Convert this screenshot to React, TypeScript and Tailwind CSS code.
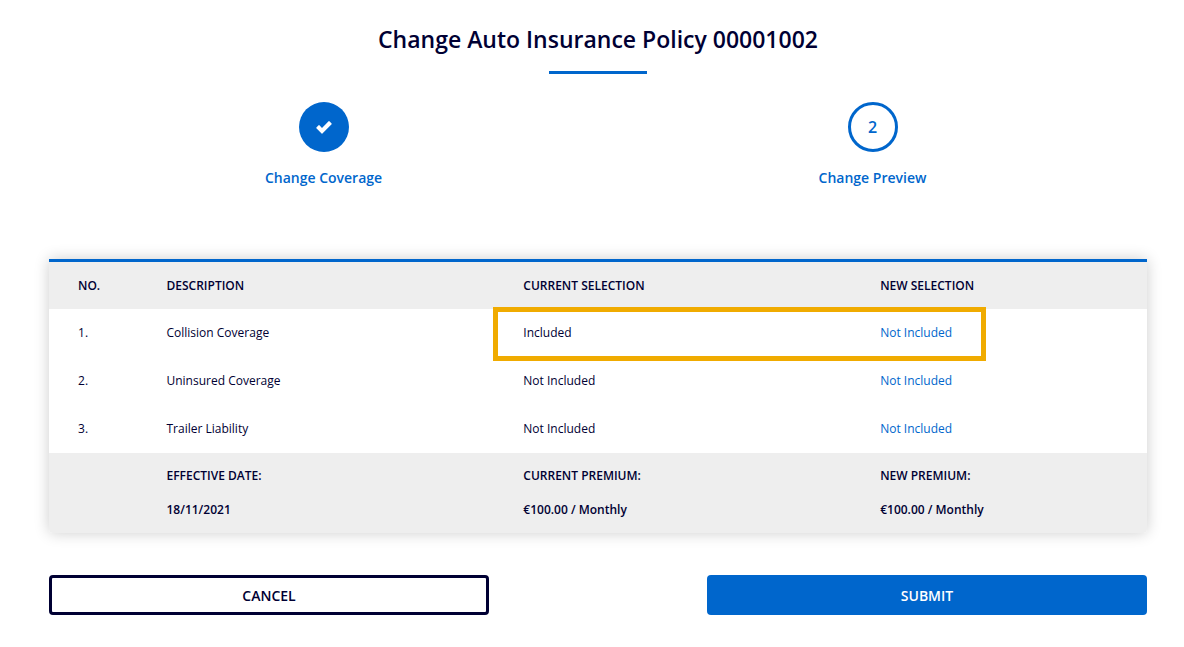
const steps = [
  { label: "Change Coverage", done: true },
  { label: "Change Preview", done: false },
];

const rows = [
  { description: "Collision Coverage", current: "Included", next: "Not Included", highlighted: true },
  { description: "Uninsured Coverage", current: "Not Included", next: "Not Included", highlighted: false },
  { description: "Trailer Liability", current: "Not Included", next: "Not Included", highlighted: false },
];

function CheckIcon() {
  return (
    <svg viewBox="0 0 16 14" className="h-[14px] w-[16px]" fill="currentColor" aria-hidden="true">
      <path d="M0.4 7.5 2.6 5.3Q3 4.9 3.4 5.3L6 7.9 12.6 1.3Q13 0.9 13.4 1.3L15.6 3.5Q16 3.9 15.6 4.3L6.4 13.5Q6 13.9 5.6 13.5L0.4 8.3Q0 7.9 0.4 7.5Z" />
    </svg>
  );
}

function Steps() {
  return (
    <ol className="mt-7 grid grid-cols-2">
      {steps.map((step, i) => (
        <li key={step.label} className="flex flex-col items-center text-[#0066cc]">
          <span
            className={
              step.done
                ? "flex size-[50px] items-center justify-center rounded-full bg-[#0066cc] text-white"
                : "flex size-[50px] items-center justify-center rounded-full border-3 border-[#0066cc] text-base font-semibold"
            }
          >
            {step.done ? <CheckIcon /> : i + 1}
          </span>
          <span className="mt-4 text-sm leading-5 font-semibold">{step.label}</span>
        </li>
      ))}
    </ol>
  );
}

function CoverageTable() {
  return (
    <table className="mt-[71px] w-full table-fixed rounded-b text-left text-xs leading-4 shadow-[0_0_15px_rgba(0,0,0,0.2)]">
      <colgroup>
        <col className="w-[10.7%]" />
        <col className="w-[32.5%]" />
        <col className="w-[32.5%]" />
        <col className="w-[24.3%]" />
      </colgroup>
      <thead className="border-t-3 border-[#0066cc] bg-[#eeeeee]">
        <tr className="h-12">
          <th scope="col" className="pt-0.5 pl-[29px] font-semibold">NO.</th>
          <th scope="col" className="pt-0.5 font-semibold">DESCRIPTION</th>
          <th scope="col" className="pt-0.5 font-semibold">CURRENT SELECTION</th>
          <th scope="col" className="pt-0.5 font-semibold">NEW SELECTION</th>
        </tr>
      </thead>
      <tbody className="bg-white">
        {rows.map((row, i) => (
          <tr key={row.description} className="h-12">
            <td className="pl-[29px]">{i + 1}.</td>
            <td>{row.description}</td>
            <td className="relative">
              {row.current}
              {row.highlighted && (
                <span className="pointer-events-none absolute -top-0.5 -left-[30px] h-[54px] w-[493px] border-5 border-[#f0ab00]" />
              )}
            </td>
            <td className="text-[#0066cc]">{row.next}</td>
          </tr>
        ))}
      </tbody>
      <tfoot className="bg-[#eeeeee] font-semibold">
        <tr>
          <td />
          <td className="pt-[15px]">EFFECTIVE DATE:</td>
          <td className="pt-[15px]">CURRENT PREMIUM:</td>
          <td className="pt-[15px]">NEW PREMIUM:</td>
        </tr>
        <tr>
          <td className="rounded-bl" />
          <td className="pt-[18px] pb-[15px]">18/11/2021</td>
          <td className="pt-[18px] pb-[15px]">€100.00 / Monthly</td>
          <td className="rounded-br pt-[18px] pb-[15px]">€100.00 / Monthly</td>
        </tr>
      </tfoot>
    </table>
  );
}

export default function App() {
  return (
    <main className="min-h-screen bg-white pt-[23px] pr-[37px] pb-8 pl-[49px] font-['Open_Sans',sans-serif] text-[#000033]">
      <header className="flex flex-col items-center">
        <h1 className="text-[23px] leading-8 font-semibold">Change Auto Insurance Policy 00001002</h1>
        <div className="mt-4 h-[3px] w-[98px] bg-[#0066cc]" />
      </header>
      <Steps />
      <CoverageTable />
      <div className="mt-[42px] grid grid-cols-2 gap-[218px] text-sm font-semibold">
        <button type="button" className="h-10 rounded border-3 border-[#000033] bg-white pt-0.5">CANCEL</button>
        <button type="button" className="h-10 rounded bg-[#0066cc] pt-0.5 text-white">SUBMIT</button>
      </div>
    </main>
  );
}
